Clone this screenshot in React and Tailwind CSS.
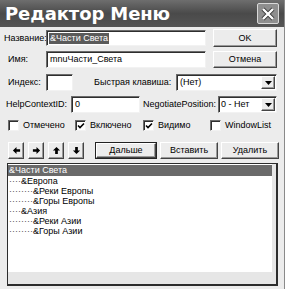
import React from "react";

const sunken =
  "bg-white border border-t-[#6b6b6b] border-l-[#6b6b6b] border-b-[#f2f2f2] border-r-[#f2f2f2] shadow-[inset_1px_1px_0_#2e2e2e]";
const raised =
  "bg-[#ececec] border border-t-white border-l-white border-b-[#444] border-r-[#444] shadow-[inset_-1px_-1px_0_#9a9a9a]";

function Btn({ className = "", children }) {
  return (
    <div className={`${raised} flex items-center justify-center whitespace-nowrap ${className}`}>
      {children}
    </div>
  );
}

function Check({ checked }) {
  return (
    <div className={`${sunken} w-[11px] h-[11px] shrink-0 flex items-center justify-center`}>
      {checked && (
        <svg width="8" height="8" viewBox="0 0 8 8">
          <path d="M1 3.5 L3 5.5 L7 1.5" stroke="#000" strokeWidth="1.6" fill="none" />
        </svg>
      )}
    </div>
  );
}

function DropArrow() {
  return (
    <div className={`${raised} w-[14px] h-[13px] shrink-0 flex items-center justify-center`}>
      <svg width="7" height="4" viewBox="0 0 7 4">
        <path d="M0 0 H7 L3.5 4 Z" fill="#000" />
      </svg>
    </div>
  );
}

function Arrow({ dir }) {
  const paths = {
    left: "M1 5 L5 1 V3.5 H9 V6.5 H5 V9 Z",
    right: "M9 5 L5 1 V3.5 H1 V6.5 H5 V9 Z",
    up: "M5 1 L1 5 H3.5 V9 H6.5 V5 H9 Z",
    down: "M5 9 L1 5 H3.5 V1 H6.5 V5 H9 Z",
  };
  return (
    <Btn className="w-[16px] h-[17px]">
      <svg width="9" height="9" viewBox="0 0 10 10">
        <path d={paths[dir]} fill="#000" />
      </svg>
    </Btn>
  );
}

export default function App() {
  const items = [
    { t: "&Части Света", d: "", sel: true },
    { t: "&Европа", d: "····" },
    { t: "&Реки Европы", d: "········" },
    { t: "&Горы Европы", d: "········" },
    { t: "&Азия", d: "····" },
    { t: "&Реки Азии", d: "········" },
    { t: "&Горы Азии", d: "········" },
  ];
  return (
    <div className="w-[285px] h-[289px] overflow-hidden bg-[#ececec] text-[9px] leading-none text-black font-['Liberation_Sans',Arial,sans-serif] flex flex-col border-r border-r-[#8a8a8a] whitespace-nowrap">
      {/* Title bar */}
      <div className="h-[27px] shrink-0 bg-gradient-to-b from-[#6e6e6e] via-[#4a4a4a] to-[#555] flex items-center justify-between pl-[5px] pr-[5px]">
        <span className="text-white font-bold text-[18px] font-['DejaVu_Sans',sans-serif] tracking-[-0.1px]">
          Редактор Меню
        </span>
        <div className="w-[22px] h-[21px] bg-[#8e8e8e] border border-[#d8d8d8] rounded-[2px] flex items-center justify-center">
          <svg width="14" height="14" viewBox="0 0 14 14">
            <path d="M2 2 L12 12 M12 2 L2 12" stroke="#3a3a3a" strokeWidth="4" />
            <path d="M2 2 L12 12 M12 2 L2 12" stroke="#fff" strokeWidth="2.4" />
          </svg>
        </div>
      </div>

      {/* Row 1 */}
      <div className="mt-[2px] h-[18px] flex items-center">
        <span className="w-[46px] shrink-0 pl-[4px]">Название:</span>
        <div className={`${sunken} w-[160px] h-[16px] shrink-0 flex items-center pl-[2px]`}>
          <span className="bg-[#5a5a5a] text-white px-[1px] py-[1px]">&amp;Части Света</span>
        </div>
        <Btn className="ml-[7px] w-[64px] h-[18px] shrink-0">OK</Btn>
      </div>

      {/* Row 2 */}
      <div className="mt-[4px] h-[17px] flex items-center">
        <span className="w-[46px] shrink-0 pl-[8px]">Имя:</span>
        <div className={`${sunken} w-[160px] h-[17px] shrink-0 flex items-center pl-[3px]`}>
          mnuЧасти_Света
        </div>
        <Btn className="ml-[7px] w-[64px] h-[17px] shrink-0">Отмена</Btn>
      </div>

      {/* Row 3 */}
      <div className="mt-[6px] h-[17px] flex items-center">
        <span className="w-[46px] shrink-0 pl-[8px]">Индекс:</span>
        <div className={`${sunken} w-[27px] h-[17px] shrink-0`} />
        <span className="ml-[21px] w-[82px] shrink-0">Быстрая клавиша:</span>
        <div className={`${sunken} w-[101px] h-[17px] shrink-0 flex items-center justify-between pl-[3px] pr-[1px]`}>
          <span>(Нет)</span>
          <DropArrow />
        </div>
      </div>

      {/* Row 4 */}
      <div className="mt-[5px] h-[17px] flex items-center">
        <span className="w-[71px] shrink-0 pl-[6px]">HelpContextID:</span>
        <div className={`${sunken} w-[69px] h-[17px] shrink-0 flex items-center pl-[3px]`}>0</div>
        <span className="ml-[3px] w-[75px] shrink-0">NegotiatePosition:</span>
        <div className={`${sunken} w-[59px] h-[17px] shrink-0 flex items-center justify-between pl-[2px] pr-[1px]`}>
          <span>0 - Нет</span>
          <DropArrow />
        </div>
      </div>

      {/* Row 5 checkboxes */}
      <div className="mt-[6px] h-[13px] flex items-center pl-[8px]">
        <div className="w-[67px] shrink-0 flex items-center gap-[4px]">
          <Check />
          <span>Отмечено</span>
        </div>
        <div className="w-[68px] shrink-0 flex items-center gap-[4px]">
          <Check checked />
          <span>Включено</span>
        </div>
        <div className="w-[67px] shrink-0 flex items-center gap-[4px]">
          <Check checked />
          <span>Видимо</span>
        </div>
        <div className="flex items-center gap-[4px]">
          <Check />
          <span>WindowList</span>
        </div>
      </div>

      {/* Row 6 buttons */}
      <div className="mt-[10px] h-[17px] flex items-center pl-[8px]">
        <div className="flex gap-[4px]">
          <Arrow dir="left" />
          <Arrow dir="right" />
          <Arrow dir="up" />
          <Arrow dir="down" />
        </div>
        <div className="ml-[11px] w-[62px] h-[17px] shrink-0 border border-[#222] flex">
          <Btn className="flex-1">Дальше</Btn>
        </div>
        <Btn className="ml-[3px] w-[58px] h-[17px] shrink-0">Вставить</Btn>
        <Btn className="ml-[3px] w-[58px] h-[17px] shrink-0">Удалить</Btn>
      </div>

      {/* List box */}
      <div className="mt-[4px] ml-[7px] w-[271px] h-[123px] shrink-0 bg-[#e6e6e6] border-l border-t border-r-2 border-b-2 border-[#2c2c2c]">
        <div className="w-[264px] h-[108px] bg-white pt-[1px]">
          {items.map((it, i) => (
            <div
              key={i}
              className={`flex items-center pl-[1px] ${it.sel ? "bg-[#6a6a6a] text-white h-[11px]" : "h-[10px]"}`}
            >
              <span className="text-[#555]">{it.d}</span>
              <span>{it.t}</span>
            </div>
          ))}
        </div>
      </div>
    </div>
  );
}
